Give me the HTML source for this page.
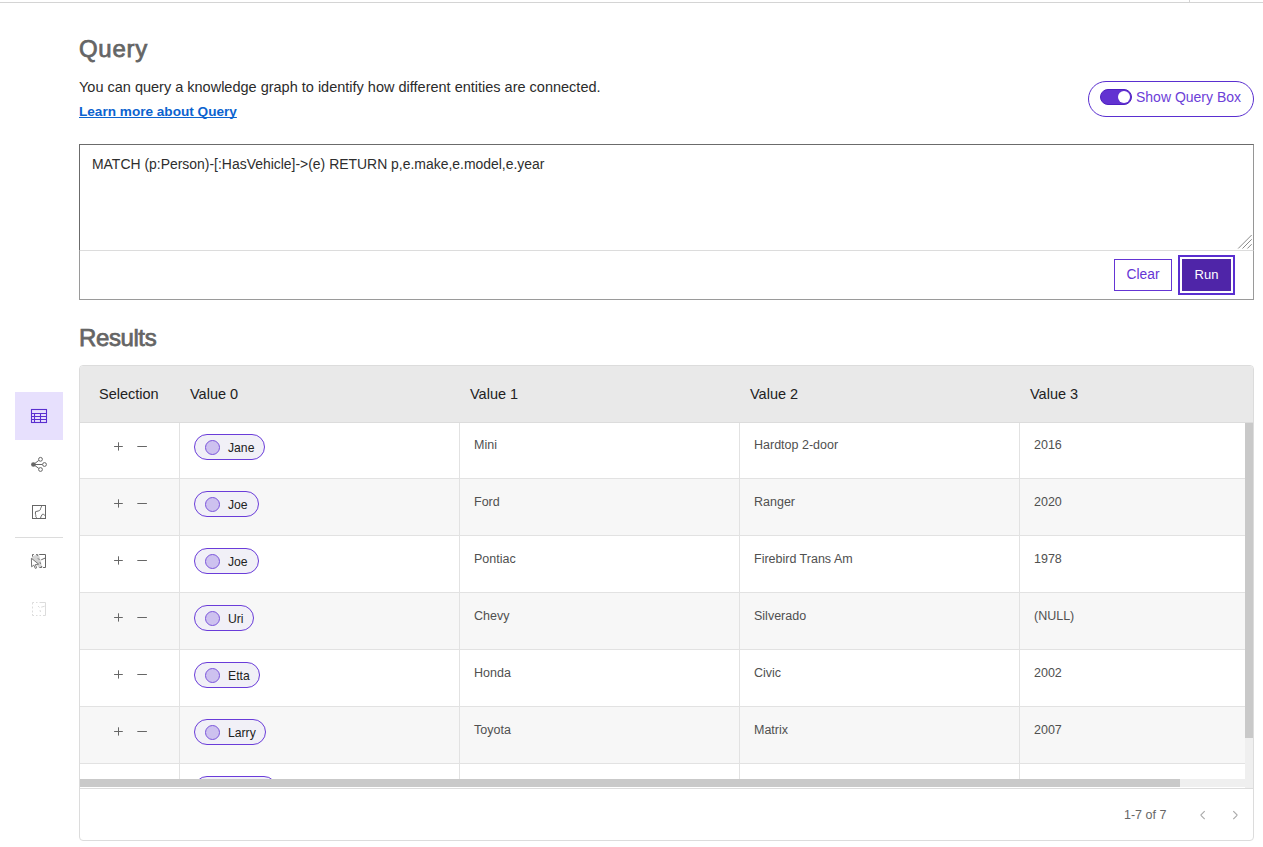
<!DOCTYPE html>
<html><head><meta charset="utf-8">
<style>
*{box-sizing:border-box;margin:0;padding:0}
html,body{width:1263px;height:847px;overflow:hidden;background:#fff;font-family:"Liberation Sans",sans-serif}
.a{position:absolute;white-space:nowrap}
#topline{left:0;top:2px;width:1263px;height:1px;background:#d4d4d4}
#topv{left:1189px;top:0;width:1px;height:3px;background:#d4d4d4}
.title{font-weight:normal;font-size:24px;color:#656565;line-height:28px;-webkit-text-stroke:0.75px #656565}
#q-title{left:79px;top:35px;letter-spacing:0.7px}
#desc{left:79px;top:79px;font-size:14.5px;color:#2b2b2b;line-height:17px}
#learn{left:79px;top:103px;font-size:13.6px;font-weight:bold;color:#0b63cf;line-height:17px;text-decoration:underline;text-underline-offset:1px;text-decoration-skip-ink:none}
#toggle{left:1088px;top:81px;width:166px;height:36px;border:1px solid #5a2fd0;border-radius:18px}
#sw{left:1100px;top:89px;width:32px;height:16px;border-radius:8px;background:#6232d1;border:1.5px solid #4f20c2}
#knob{left:1118px;top:91px;width:12px;height:12px;border-radius:6px;background:#fff}
#sqb{left:1136px;top:89px;font-size:14px;color:#6c40d8;line-height:17px}
#qbox{left:79px;top:144px;width:1175px;height:107px;background:#fff;border:1px solid #6b6b6b;border-right-color:#969696;border-bottom-color:#dcdcdc}
#qsep{left:79px;top:251px;width:1175px;height:49px;background:#fff;border:1px solid #9a9a9a;border-top:0}
#qtext{left:92px;top:156px;font-size:13.95px;color:#2e2e2e;line-height:17px}
#clear{left:1114px;top:259px;width:58px;height:32px;border:1px solid #6535d4;color:#6535d4;font-size:13.8px;line-height:30px;text-align:center}
#runo{left:1178px;top:255px;width:57px;height:40px;border:2px solid #5a2fd0}
#run{left:1182px;top:259px;width:49px;height:32px;background:#4f25a8;color:#fff;font-size:13px;line-height:32px;text-align:center}
#r-title{left:79px;top:324px;letter-spacing:-0.4px}
/* sidebar */
#sb-act{left:15px;top:392px;width:48px;height:48px;background:#e7e0fd}
#sb-sep{left:15px;top:537px;width:48px;height:1px;background:#dcdcdc}
/* table */
#tbl{left:79px;top:365px;width:1175px;height:476px;border:1px solid #dcdcdc;border-radius:4px;overflow:hidden;background:#fff}
#thead{left:0;top:0;width:1173px;height:57px;background:#e9e9e9;border-bottom:1px solid #dcdcdc}
.th{font-size:14.5px;color:#222;line-height:17px;top:20px}
#tbody{left:0;top:57px;width:1165px;height:356px;overflow:hidden}
.row{left:0;width:1165px;border-bottom:1px solid #e2e2e2}
.row.alt{background:#f7f7f7}
.vline{top:0;width:1px;height:400px;background:#e2e2e2}
.cell{font-size:12.5px;color:#505050;line-height:15px}
.pm{font-size:16px;color:#555;line-height:16px}
.chip{height:26px;border:1px solid #6a3cd9;border-radius:13px;background:#f1f0f7}
.dot{left:10px;top:5px;width:15px;height:15px;border:1px solid #7b55db;border-radius:50%;background:#cdc1ef}
.cname{font-size:12.2px;color:#222;line-height:15px;top:6px}
#vtrack{left:1165px;top:57px;width:8px;height:365px;background:#efefef}
#vthumb{left:1165px;top:57px;width:8px;height:315px;background:#c9c9c9}
#htrack{left:0;top:413px;width:1165px;height:8px;background:#efefef}
#hthumb{left:0;top:413px;width:1100px;height:8px;background:#c9c9c9}
#tfoot{left:0;top:422px;width:1173px;height:1px;background:#dcdcdc}
#pg{left:1044px;top:442px;font-size:12.5px;color:#666;line-height:15px}
.chev{font-size:18px;color:#999;line-height:18px}
</style></head><body>
<div class="a" style="left:0;top:0;width:1263px;height:2px;background:#fff"></div>
<div class="a" id="topline"></div>
<div class="a" id="topv"></div>

<div class="a title" id="q-title">Query</div>
<div class="a" id="desc">You can query a knowledge graph to identify how different entities are connected.</div>
<div class="a" id="learn">Learn more about Query</div>

<div class="a" id="toggle"></div>
<div class="a" id="sw"></div>
<div class="a" id="knob"></div>
<div class="a" id="sqb">Show Query Box</div>

<div class="a" id="qbox"></div>
<div class="a" id="qsep"></div>
<svg class="a" style="left:1230px;top:230px" width="24" height="20"><path d="M8.2 18.5L21.7 5M12.5 18.5L21.7 9.3M17.4 18.5L21.7 14.2" stroke="#8a8a8a" stroke-width="1" fill="none"/></svg>
<div class="a" id="qtext">MATCH (p:Person)-[:HasVehicle]-&gt;(e) RETURN p,e.make,e.model,e.year</div>
<div class="a" id="clear">Clear</div>
<div class="a" id="runo"></div>
<div class="a" id="run">Run</div>

<div class="a title" id="r-title">Results</div>

<div class="a" id="sb-act"></div>
<div class="a" id="sb-sep"></div>
<svg class="a" style="left:0;top:0" width="80" height="640" viewBox="0 0 80 640">
  <g fill="none" stroke="#5a2fd0" stroke-width="1.1">
    <rect x="31.5" y="409.5" width="15" height="13"/>
    <path d="M31.5 413.5H46.5M31.5 416.5H46.5M31.5 419.5H46.5M34.5 413.5V422.5M40.5 413.5V422.5"/>
  </g>
  <g fill="none" stroke="#666" stroke-width="1">
    <path d="M33.5 464.5L38.8 460.4M33.5 464.5H42.3M33.5 464.5L38.8 468.4"/>
    <circle cx="40.5" cy="459.3" r="1.9"/>
    <circle cx="44.5" cy="464.5" r="1.9"/>
    <circle cx="40.5" cy="469.5" r="1.9"/>
  </g>
  <circle cx="33.4" cy="464.5" r="2.3" fill="#666"/>
  <g fill="none" stroke="#666" stroke-width="1">
    <rect x="32.5" y="505.5" width="13" height="13"/>
    <path d="M41.7 505.5C41.5 507.5 40.5 508 40.4 509.3C40.3 510.5 39 510.8 38 511C37.2 511.2 36.5 511.6 35.7 511.5C35.2 512.5 35.3 513.6 35.6 514.6C36.3 515 35.4 516 35.9 516.8C36.5 517.3 36.6 518 36.8 518.5"/>
    <path d="M40.4 518.5C40.8 517 41.4 515.2 42.4 514.3C43.3 514 44 514.6 44.6 515.2L45.5 515.4"/>
  </g>
  <path d="M33.2 556L38.6 554.2L40.6 560L42 567.2L38.6 567.6L36.5 564.5L31.5 558.5Z" fill="#d3d3d3"/>
  <g fill="none" stroke="#666" stroke-width="1">
    <path d="M39.2 554.5H45.5V567.5H43.1"/>
    <path d="M32.5 556.6V554.5H33.8M36.2 554.5H37.4V555.8M41.7 566V567.5H39.4"/>
    <path d="M41.2 559.8L45.1 558.1M38 558.4L39.4 559.8M40 562.3L40.5 563.8"/>
  </g>
  <path d="M31.4 558.3L31.6 566.8L33.8 565.1L35.3 568.4L36.7 567.8L35.3 564.6L38.6 564.1Z" fill="#fff" stroke="#666" stroke-width="0.9" stroke-linejoin="round"/>
  <g fill="none" stroke="#dcdcdc" stroke-width="1">
    <path d="M39.5 602.5H45.5V615.5H43"/>
    <path d="M32.5 604.5V602.5H34M36 602.5H37.5M32.5 606.5V608.5M32.5 610.5V612.5M32.5 614V615.5H34M36 615.5H37.5M39.5 615.5H41"/>
    <path d="M41.2 607.2L44.7 606.2M38 606L39.5 607.5M40 610L40.5 612"/>
  </g>
</svg>


<div class="a" id="tbl">
  <div class="a" id="thead"></div>
  <div class="a th" style="left:19px">Selection</div>
  <div class="a th" style="left:110px">Value 0</div>
  <div class="a th" style="left:390px">Value 1</div>
  <div class="a th" style="left:670px">Value 2</div>
  <div class="a th" style="left:950px">Value 3</div>
  <div class="a" id="tbody"><div class="a row" style="top:0px;height:56px"></div>
<svg class="a" style="left:30px;top:14px" width="40" height="20"><path d="M4.1 9.5H12.8M8.5 5.3V13.6M27.3 9.5H36.9" stroke="#666" stroke-width="1" fill="none"/></svg>
<div class="a cell" style="left:394px;top:15px">Mini</div>
<div class="a cell" style="left:674px;top:15px">Hardtop 2-door</div>
<div class="a cell" style="left:954px;top:15px">2016</div>
<div class="a chip" style="left:114px;top:11px;width:71px"><div class="a dot"></div><div class="a cname" style="left:33px">Jane</div></div>
<div class="a row alt" style="top:56px;height:57px"></div>
<svg class="a" style="left:30px;top:71px" width="40" height="20"><path d="M4.1 9.5H12.8M8.5 5.3V13.6M27.3 9.5H36.9" stroke="#666" stroke-width="1" fill="none"/></svg>
<div class="a cell" style="left:394px;top:72px">Ford</div>
<div class="a cell" style="left:674px;top:72px">Ranger</div>
<div class="a cell" style="left:954px;top:72px">2020</div>
<div class="a chip" style="left:114px;top:68px;width:65px"><div class="a dot"></div><div class="a cname" style="left:33px">Joe</div></div>
<div class="a row" style="top:113px;height:57px"></div>
<svg class="a" style="left:30px;top:128px" width="40" height="20"><path d="M4.1 9.5H12.8M8.5 5.3V13.6M27.3 9.5H36.9" stroke="#666" stroke-width="1" fill="none"/></svg>
<div class="a cell" style="left:394px;top:129px">Pontiac</div>
<div class="a cell" style="left:674px;top:129px">Firebird Trans Am</div>
<div class="a cell" style="left:954px;top:129px">1978</div>
<div class="a chip" style="left:114px;top:125px;width:65px"><div class="a dot"></div><div class="a cname" style="left:33px">Joe</div></div>
<div class="a row alt" style="top:170px;height:57px"></div>
<svg class="a" style="left:30px;top:185px" width="40" height="20"><path d="M4.1 9.5H12.8M8.5 5.3V13.6M27.3 9.5H36.9" stroke="#666" stroke-width="1" fill="none"/></svg>
<div class="a cell" style="left:394px;top:186px">Chevy</div>
<div class="a cell" style="left:674px;top:186px">Silverado</div>
<div class="a cell" style="left:954px;top:186px">(NULL)</div>
<div class="a chip" style="left:114px;top:182px;width:60px"><div class="a dot"></div><div class="a cname" style="left:33px">Uri</div></div>
<div class="a row" style="top:227px;height:57px"></div>
<svg class="a" style="left:30px;top:242px" width="40" height="20"><path d="M4.1 9.5H12.8M8.5 5.3V13.6M27.3 9.5H36.9" stroke="#666" stroke-width="1" fill="none"/></svg>
<div class="a cell" style="left:394px;top:243px">Honda</div>
<div class="a cell" style="left:674px;top:243px">Civic</div>
<div class="a cell" style="left:954px;top:243px">2002</div>
<div class="a chip" style="left:114px;top:239px;width:66px"><div class="a dot"></div><div class="a cname" style="left:33px">Etta</div></div>
<div class="a row alt" style="top:284px;height:57px"></div>
<svg class="a" style="left:30px;top:299px" width="40" height="20"><path d="M4.1 9.5H12.8M8.5 5.3V13.6M27.3 9.5H36.9" stroke="#666" stroke-width="1" fill="none"/></svg>
<div class="a cell" style="left:394px;top:300px">Toyota</div>
<div class="a cell" style="left:674px;top:300px">Matrix</div>
<div class="a cell" style="left:954px;top:300px">2007</div>
<div class="a chip" style="left:114px;top:296px;width:72px"><div class="a dot"></div><div class="a cname" style="left:33px">Larry</div></div>
<div class="a row" style="top:341px;height:57px"></div>
<div class="a chip" style="left:114px;top:353px;width:83px"><div class="a dot"></div><div class="a cname" style="left:33px">Sam</div></div>
<div class="a vline" style="left:99px"></div>
<div class="a vline" style="left:379px"></div>
<div class="a vline" style="left:659px"></div>
<div class="a vline" style="left:939px"></div></div>
  <div class="a" id="vtrack"></div>
  <div class="a" id="vthumb"></div>
  <div class="a" id="htrack"></div>
  <div class="a" id="hthumb"></div>
  <div class="a" id="tfoot"></div>
  <div class="a" id="pg">1-7 of 7</div>
  <svg class="a" style="left:1110px;top:440px" width="60" height="20"><path d="M10.7 9.2L14.7 13.2M10.7 9.2L14.7 5.2M47.3 9.2L43.3 13.2M47.3 9.2L43.3 5.2" stroke="#aaa" stroke-width="1.2" fill="none" transform="translate(-0.0,0)"/></svg>
</div>
</body></html>
